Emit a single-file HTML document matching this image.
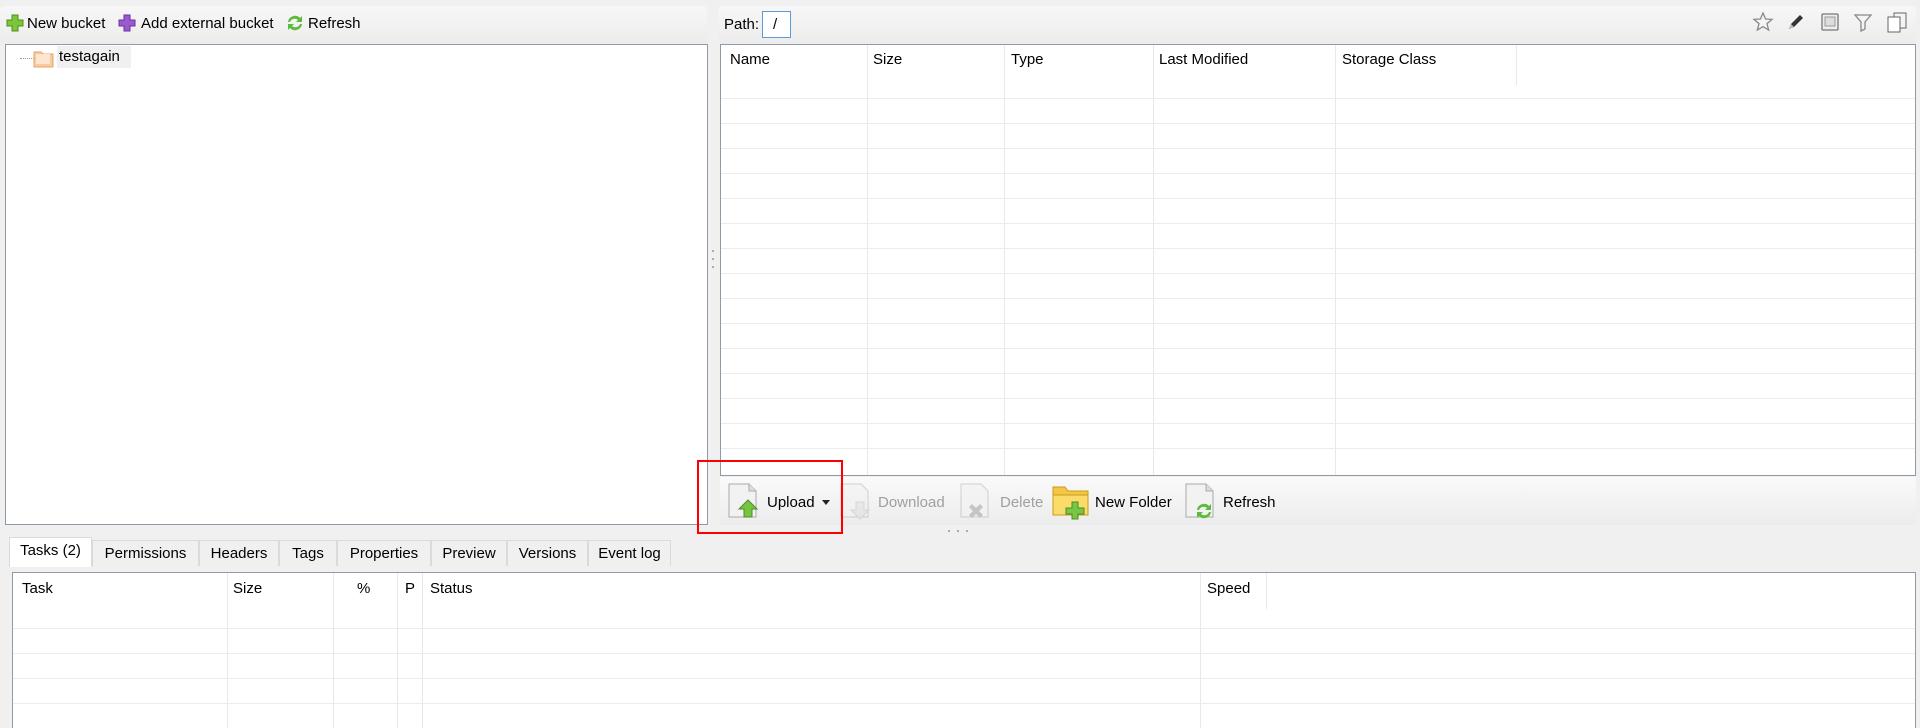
<!DOCTYPE html>
<html style="width:1920px;height:728px;overflow:hidden"><head><meta charset="utf-8"><style>
*{box-sizing:border-box;margin:0;padding:0}
body{width:1920px;height:728px;background:#f0f0f0;font-family:"Liberation Sans",sans-serif;font-size:15px;color:#000;position:relative;overflow:hidden}
.a{position:absolute}
.box{position:absolute;background:#fff;border:1px solid #8e9aa6}
.vl{position:absolute;width:1px;background:#e8e8e8}
.hl{position:absolute;height:1px;background:#ececec}
.hd{position:absolute;white-space:nowrap}
.tab{position:absolute;top:540px;height:26px;border:1px solid #dadada;border-bottom:none;background:#f0f0f0;padding:4px 4px;white-space:nowrap;text-align:center}
</style></head><body>
<div class="a" style="left:0;top:6px;width:707px;height:38px;background:linear-gradient(#f7f7f7,#ececec);border-radius:4px"></div>
<div class="a" style="left:718px;top:6px;width:1198px;height:38px;background:linear-gradient(#f7f7f7,#ececec);border-radius:4px"></div>
<svg class="a" style="left:6px;top:14px" width="18" height="18"><path d="M6 1h6v5h5v6h-5v5H6v-5H1V6h5z" fill="#7cc63a" stroke="#4d8f1c"/></svg>
<span class="a" style="left:27px;top:15px">New bucket</span>
<svg class="a" style="left:118px;top:14px" width="18" height="18"><path d="M6 1h6v5h5v6h-5v5H6v-5H1V6h5z" fill="#9a5ad0" stroke="#6a2fa0"/></svg>
<span class="a" style="left:141px;top:15px">Add external bucket</span>
<svg class="a" style="left:285px;top:13px" width="20" height="20"><path d="M3 9a7 7 0 0 1 12-4l2-2v6h-6l2-2a5 5 0 0 0-8 2z" fill="#5cbb3a"/><path d="M17 11a7 7 0 0 1-12 4l-2 2v-6h6l-2 2a5 5 0 0 0 8-2z" fill="#5cbb3a"/></svg>
<span class="a" style="left:308px;top:15px">Refresh</span>
<div class="box" style="left:5px;top:44px;width:703px;height:481px"></div>
<div class="a" style="left:20px;top:58px;width:14px;border-top:1px dotted #999"></div>
<svg class="a" style="left:33px;top:48px" width="22" height="20"><path d="M1 4h7l2 2h10v13H1z" fill="#f9c9a0" stroke="#e2a56c"/><rect x="3" y="6" width="14" height="10" fill="#fde5d0"/></svg>
<div class="a" style="left:57px;top:46px;width:74px;height:22px;background:#f0f0f0"></div>
<span class="a" style="left:59px;top:48px">testagain</span>
<div class="a" style="left:712px;top:250px;width:2px;height:2px;background:#aaa;box-shadow:0 8px #aaa,0 16px #aaa"></div>
<span class="a" style="left:724px;top:16px">Path:</span>
<div class="a" style="left:762px;top:11px;width:29px;height:27px;border:1px solid #5b9bd5;background:#fff;padding:4px 10px">/</div>
<svg class="a" style="left:1752px;top:11px" width="22" height="22"><path d="M11 2l2.6 6 6.4.4-5 4.2 1.6 6.4L11 15.6 5.4 19 7 12.6 2 8.4 8.4 8z" fill="#f4f4f4" stroke="#888" stroke-width="1.3"/></svg>
<svg class="a" style="left:1785px;top:11px" width="22" height="22"><path d="M4 18l2-5 9-9 3 3-9 9z" fill="#333"/><path d="M4 18l2-5 3 3z" fill="#bbb"/></svg>
<svg class="a" style="left:1820px;top:12px" width="20" height="20"><rect x="2" y="2" width="16" height="16" rx="1" fill="#eee" stroke="#777" stroke-width="1.3"/><rect x="5" y="5" width="10" height="9" fill="#ddd" stroke="#999"/></svg>
<svg class="a" style="left:1853px;top:12px" width="20" height="20"><path d="M2 3h16l-6 7v7l-4 2v-9z" fill="#f4f4f4" stroke="#888" stroke-width="1.3"/></svg>
<svg class="a" style="left:1886px;top:11px" width="22" height="22"><rect x="8" y="2" width="12" height="15" fill="#f4f4f4" stroke="#666"/><rect x="2" y="6" width="12" height="15" fill="#fff" stroke="#666"/></svg>
<div class="box" style="left:720px;top:44px;width:1196px;height:432px"></div>
<div class="vl" style="left:867px;top:45px;height:430px"></div>
<div class="vl" style="left:1004px;top:45px;height:430px"></div>
<div class="vl" style="left:1153px;top:45px;height:430px"></div>
<div class="vl" style="left:1335px;top:45px;height:430px"></div>
<div class="vl" style="left:1516px;top:45px;height:40px"></div>
<span class="hd" style="left:730px;top:51px">Name</span>
<span class="hd" style="left:873px;top:51px">Size</span>
<span class="hd" style="left:1011px;top:51px">Type</span>
<span class="hd" style="left:1159px;top:51px">Last Modified</span>
<span class="hd" style="left:1342px;top:51px">Storage Class</span>
<div class="hl" style="left:721px;top:98px;width:1194px"></div>
<div class="hl" style="left:721px;top:123px;width:1194px"></div>
<div class="hl" style="left:721px;top:148px;width:1194px"></div>
<div class="hl" style="left:721px;top:173px;width:1194px"></div>
<div class="hl" style="left:721px;top:198px;width:1194px"></div>
<div class="hl" style="left:721px;top:223px;width:1194px"></div>
<div class="hl" style="left:721px;top:248px;width:1194px"></div>
<div class="hl" style="left:721px;top:273px;width:1194px"></div>
<div class="hl" style="left:721px;top:298px;width:1194px"></div>
<div class="hl" style="left:721px;top:323px;width:1194px"></div>
<div class="hl" style="left:721px;top:348px;width:1194px"></div>
<div class="hl" style="left:721px;top:373px;width:1194px"></div>
<div class="hl" style="left:721px;top:398px;width:1194px"></div>
<div class="hl" style="left:721px;top:423px;width:1194px"></div>
<div class="hl" style="left:721px;top:448px;width:1194px"></div>
<div class="a" style="left:720px;top:477px;width:1196px;height:48px;background:linear-gradient(#fafafa,#ececec)"></div>
<svg class="a" style="left:726px;top:482px" width="36" height="40"><path d="M3 2h20l7 7v26H3z" fill="#f2f2f2" stroke="#aaa"/><path d="M23 2v7h7" fill="#ddd" stroke="#aaa"/><path d="M22 18l9 9h-5v8h-8v-8h-5z" fill="#76c442" stroke="#4a8f22"/></svg>
<span class="a" style="left:767px;top:494px">Upload</span>
<svg class="a" style="left:822px;top:500px" width="8" height="5"><path d="M0 0h8L4 5z" fill="#222"/></svg>
<svg class="a" style="left:838px;top:482px" width="36" height="40" opacity=".5"><path d="M3 2h20l7 7v26H3z" fill="#f2f2f2" stroke="#aaa"/><path d="M18 20v8h-5l9 9 9-9h-5v-8z" fill="#ddd" stroke="#bbb"/></svg>
<span class="a" style="left:878px;top:494px;color:#a0a0a0">Download</span>
<svg class="a" style="left:958px;top:482px" width="36" height="40" opacity=".5"><path d="M3 2h20l7 7v26H3z" fill="#f2f2f2" stroke="#aaa"/><path d="M14 22l4 4 4-4 3 3-4 4 4 4-3 3-4-4-4 4-3-3 4-4-4-4z" fill="#999"/></svg>
<span class="a" style="left:1000px;top:494px;color:#a0a0a0">Delete</span>
<svg class="a" style="left:1052px;top:484px" width="40" height="36"><path d="M1 3h12l3 4h20v24H1z" fill="#f3c644" stroke="#c99a1e"/><path d="M1 11h35v20H1z" fill="#fbdc6a" stroke="#c99a1e"/><path d="M20 18h6v6h6v6h-6v5h-6v-5h-6v-6h6z" fill="#79c545" stroke="#4a8f22"/></svg>
<span class="a" style="left:1095px;top:494px">New Folder</span>
<svg class="a" style="left:1183px;top:482px" width="36" height="40"><path d="M3 2h20l7 7v26H3z" fill="#f2f2f2" stroke="#aaa"/><path d="M23 2v7h7" fill="#ddd" stroke="#aaa"/><path d="M14 28a7 7 0 0 1 12-4l2-2v6h-6l2-2a5 5 0 0 0-8 2z" fill="#5cbb3a"/><path d="M28 30a7 7 0 0 1-12 4l-2 2v-6h6l-2 2a5 5 0 0 0 8-2z" fill="#5cbb3a"/></svg>
<span class="a" style="left:1223px;top:494px">Refresh</span>
<div class="a" style="left:948px;top:530px;width:2px;height:2px;background:#aaa;box-shadow:9px 0 #aaa,18px 0 #aaa"></div>
<div class="a" style="left:697px;top:460px;width:146px;height:74px;border:2px solid #f00"></div>
<div class="tab" style="left:9px;width:83px;top:537px;height:30px;background:#fff;z-index:2">Tasks (2)</div>
<div class="tab" style="left:92px;width:107px">Permissions</div>
<div class="tab" style="left:199px;width:80px">Headers</div>
<div class="tab" style="left:279px;width:58px">Tags</div>
<div class="tab" style="left:337px;width:94px">Properties</div>
<div class="tab" style="left:431px;width:76px">Preview</div>
<div class="tab" style="left:507px;width:81px">Versions</div>
<div class="tab" style="left:588px;width:83px">Event log</div>
<div class="a" style="left:12px;top:572px;width:1904px;height:156px;background:#fff;border:1px solid #8e9aa6;border-bottom:none"></div>
<div class="vl" style="left:227px;top:573px;height:155px"></div>
<div class="vl" style="left:333px;top:573px;height:155px"></div>
<div class="vl" style="left:397px;top:573px;height:155px"></div>
<div class="vl" style="left:422px;top:573px;height:155px"></div>
<div class="vl" style="left:1200px;top:573px;height:155px"></div>
<div class="vl" style="left:1266px;top:573px;height:36px"></div>
<span class="hd" style="left:22px;top:580px">Task</span>
<span class="hd" style="left:233px;top:580px">Size</span>
<span class="hd" style="left:357px;top:580px">%</span>
<span class="hd" style="left:405px;top:580px">P</span>
<span class="hd" style="left:430px;top:580px">Status</span>
<div class="a" style="left:1207px;top:580px">Speed</div>
<div class="hl" style="left:13px;top:628px;width:1902px"></div>
<div class="hl" style="left:13px;top:653px;width:1902px"></div>
<div class="hl" style="left:13px;top:678px;width:1902px"></div>
<div class="hl" style="left:13px;top:703px;width:1902px"></div>
</body></html>
